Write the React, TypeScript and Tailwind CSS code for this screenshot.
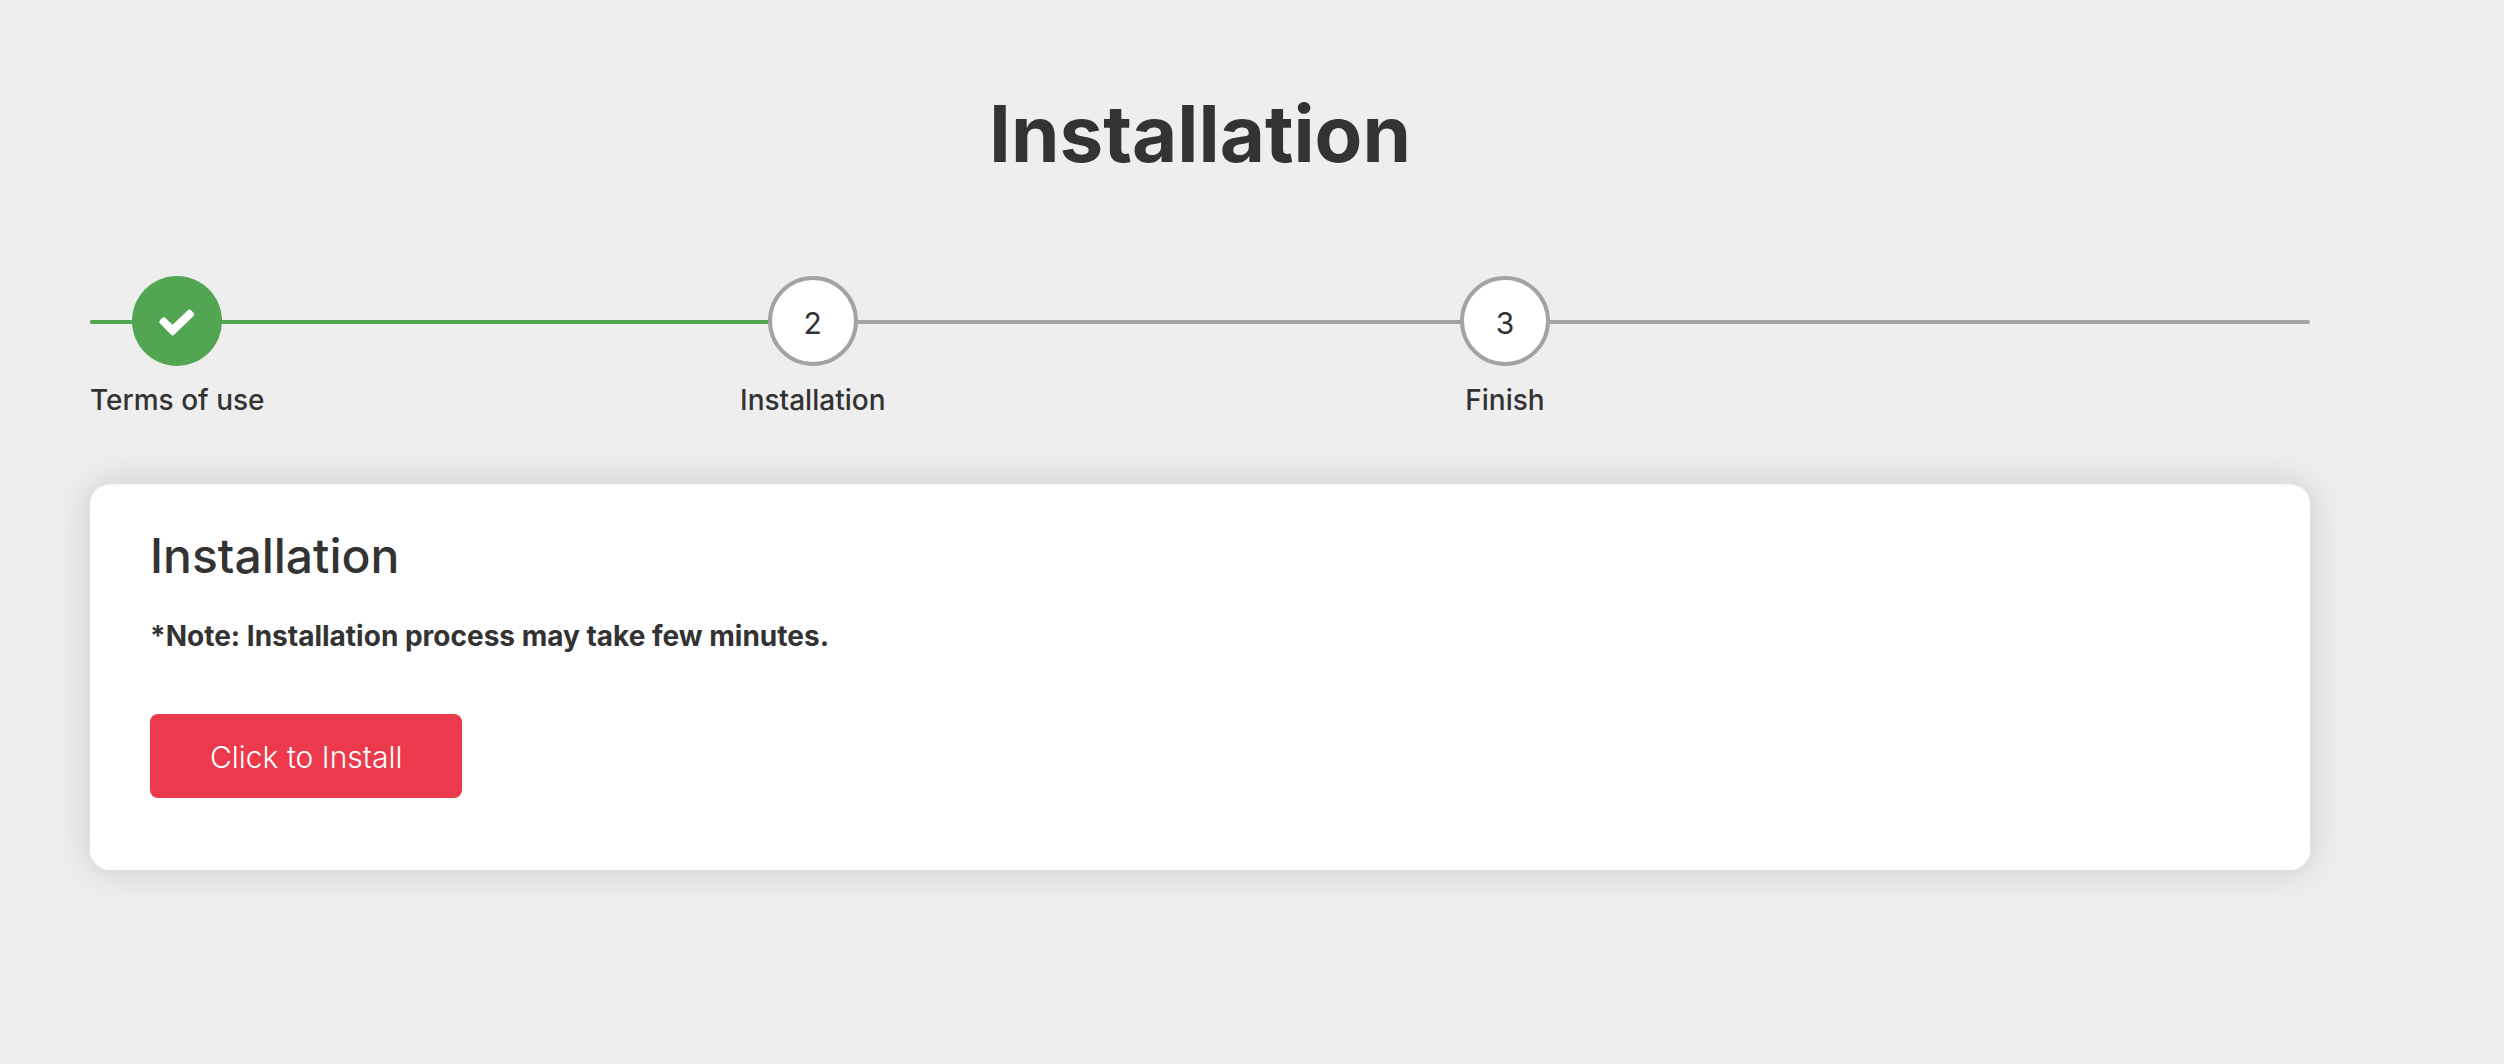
const steps = [
  { number: 1, label: 'Terms of use', done: true },
  { number: 2, label: 'Installation', done: false },
  { number: 3, label: 'Finish', done: false },
];

function CheckIcon() {
  return (
    <svg viewBox="0 0 38 28" className="mt-0.5 h-[27px] w-9" fill="#fff" aria-hidden="true">
      <path d="M1.2 11.3 3.2 9.2Q5 7.8 6.8 9.3L14.3 16.5 30.5 1.2Q32.2 -.4 33.9 1.2L36.6 4Q38 5.6 36.5 7.2L15.6 27.2Q14.2 28.4 12.8 27L1.2 15.1Q-.6 13.3 1.2 11.3Z" />
    </svg>
  );
}

function Stepper() {
  return (
    <ol className="relative grid grid-cols-[650fr_720fr_850fr]">
      <li aria-hidden="true" className="absolute inset-x-0 top-11 h-1 rounded-sm bg-[#a3a3a3]">
        <div className="h-1 w-[31%] rounded-sm bg-[#52a551]" />
      </li>
      {steps.map((step) => (
        <li
          key={step.number}
          aria-current={step.number === 2 ? 'step' : undefined}
          className="relative flex w-fit flex-col items-center gap-3"
        >
          {step.done ? (
            <span className="flex size-[90px] items-center justify-center rounded-full bg-[#52a551]">
              <CheckIcon />
            </span>
          ) : (
            <span className="flex size-[90px] items-center justify-center rounded-full border-4 border-[#a3a3a3] bg-white pt-1 text-[30px]">
              {step.number}
            </span>
          )}
          <span className="text-[28px] leading-[44px] font-medium whitespace-nowrap">{step.label}</span>
        </li>
      ))}
    </ol>
  );
}

export default function App() {
  return (
    <main className="min-h-screen bg-[#eeeeee] pt-20 pr-[194px] pb-20 pl-[90px] font-['Inter',sans-serif] text-[#333333]">
      <h1 className="text-center text-[78px] leading-[108px] font-bold">Installation</h1>
      <div className="mt-22">
        <Stepper />
      </div>
      <section className="mt-[62px] rounded-[20px] border-t-2 border-[#f7f7f7] bg-white px-[60px] pt-10 pb-[72px] shadow-[0_0_40px_rgba(0,0,0,0.15)]">
        <h2 className="text-[48px] leading-[60px] font-medium">Installation</h2>
        <p className="mt-7 text-[28px] leading-[44px] font-bold">
          *Note: Installation process may take few minutes.
        </p>
        <button type="button" className="mt-14 h-[84px] rounded-lg bg-[#ec3a4c] px-[60px] pt-0.5 text-[30px] font-light text-white">
          Click to Install
        </button>
      </section>
    </main>
  );
}
